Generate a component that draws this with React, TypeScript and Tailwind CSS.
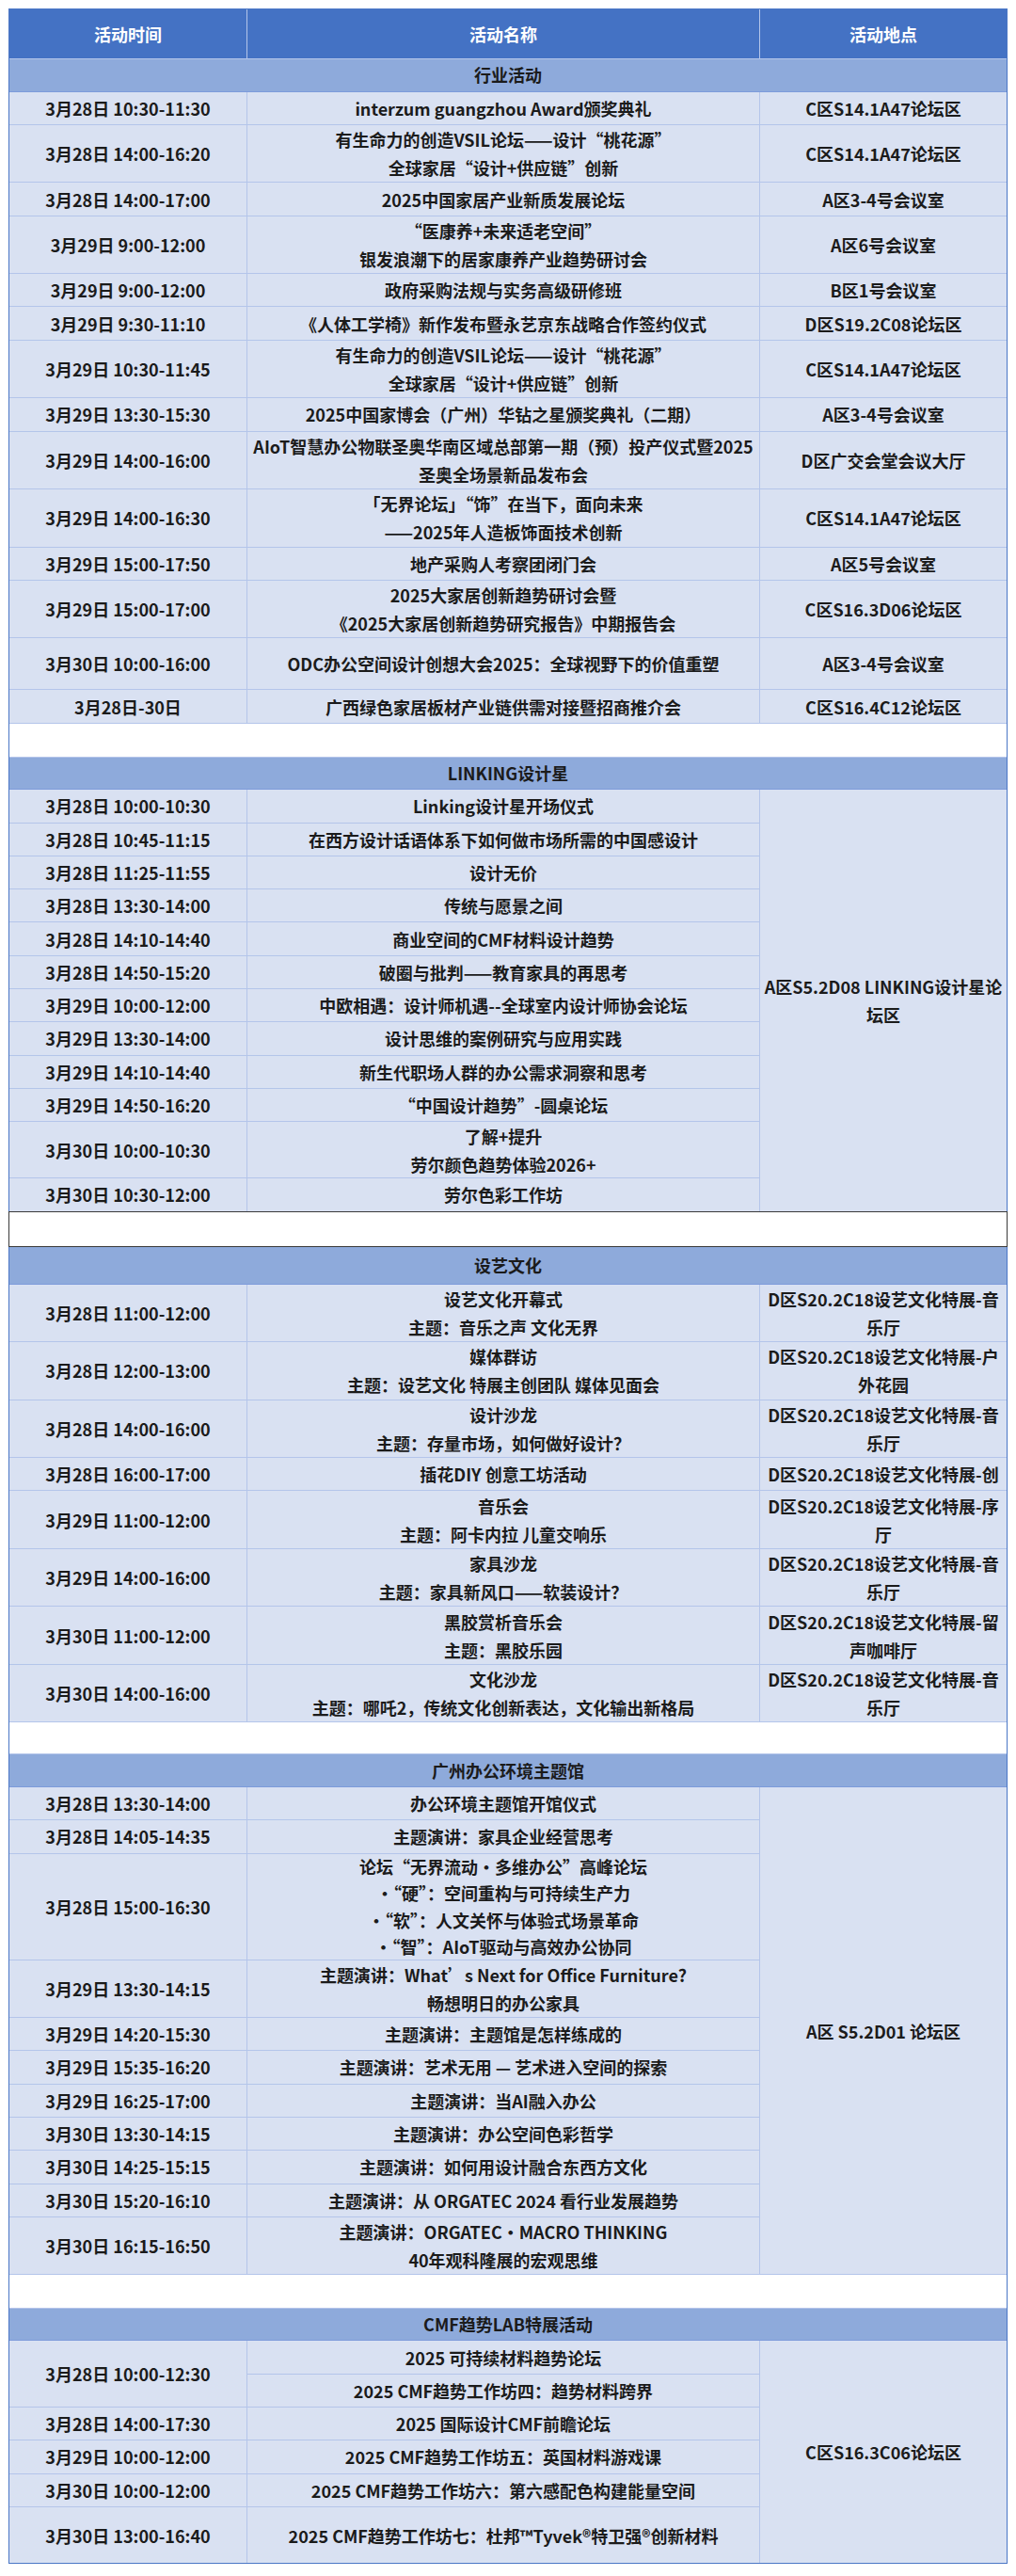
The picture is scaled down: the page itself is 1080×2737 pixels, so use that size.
import React from "react";

type Row = {
  t?: string;
  tSpan?: number;
  n: string[];
  l?: string[];
  lSpan?: number;
  h: string;
  lh?: string;
};

type Section = {
  title: string;
  titleH: string;
  blankH?: string;
  blankDark?: boolean;
  rows: Row[];
};

const S = "h-[34.3px]";
const D = "h-[60.5px]";

const sections: Section[] = [
  {
    title: "行业活动",
    titleH: "h-[33.6px]",
    rows: [
      { t: "3月28日 10:30-11:30", n: ["interzum guangzhou Award颁奖典礼"], l: ["C区S14.1A47论坛区"], h: S },
      { t: "3月28日 14:00-16:20", n: ["有生命力的创造VSIL论坛——设计“桃花源”", "全球家居“设计+供应链”创新"], l: ["C区S14.1A47论坛区"], h: D },
      { t: "3月28日 14:00-17:00", n: ["2025中国家居产业新质发展论坛"], l: ["A区3-4号会议室"], h: S },
      { t: "3月29日 9:00-12:00", n: ["“医康养+未来适老空间”", "银发浪潮下的居家康养产业趋势研讨会"], l: ["A区6号会议室"], h: D },
      { t: "3月29日 9:00-12:00", n: ["政府采购法规与实务高级研修班"], l: ["B区1号会议室"], h: S },
      { t: "3月29日 9:30-11:10", n: ["《人体工学椅》新作发布暨永艺京东战略合作签约仪式"], l: ["D区S19.2C08论坛区"], h: S },
      { t: "3月29日 10:30-11:45", n: ["有生命力的创造VSIL论坛——设计“桃花源”", "全球家居“设计+供应链”创新"], l: ["C区S14.1A47论坛区"], h: D },
      { t: "3月29日 13:30-15:30", n: ["2025中国家博会（广州）华钻之星颁奖典礼（二期）"], l: ["A区3-4号会议室"], h: S },
      { t: "3月29日 14:00-16:00", n: ["AIoT智慧办公物联圣奥华南区域总部第一期（预）投产仪式暨2025", "圣奥全场景新品发布会"], l: ["D区广交会堂会议大厅"], h: D },
      { t: "3月29日 14:00-16:30", n: ["「无界论坛」“饰”在当下，面向未来", "——2025年人造板饰面技术创新"], l: ["C区S14.1A47论坛区"], h: D },
      { t: "3月29日 15:00-17:50", n: ["地产采购人考察团闭门会"], l: ["A区5号会议室"], h: S },
      { t: "3月29日 15:00-17:00", n: ["2025大家居创新趋势研讨会暨", "《2025大家居创新趋势研究报告》中期报告会"], l: ["C区S16.3D06论坛区"], h: D },
      { t: "3月30日 10:00-16:00", n: ["ODC办公空间设计创想大会2025：全球视野下的价值重塑"], l: ["A区3-4号会议室"], h: "h-[54px]" },
      { t: "3月28日-30日", n: ["广西绿色家居板材产业链供需对接暨招商推介会"], l: ["C区S16.4C12论坛区"], h: S },
    ],
  },
  {
    title: "LINKING设计星",
    titleH: "h-[33.6px]",
    blankH: "h-[35px]",
    rows: [
      { t: "3月28日 10:00-10:30", n: ["Linking设计星开场仪式"], l: ["A区S5.2D08 LINKING设计星论", "坛区"], lSpan: 12, h: S },
      { t: "3月28日 10:45-11:15", n: ["在西方设计话语体系下如何做市场所需的中国感设计"], h: S },
      { t: "3月28日 11:25-11:55", n: ["设计无价"], h: S },
      { t: "3月28日 13:30-14:00", n: ["传统与愿景之间"], h: S },
      { t: "3月28日 14:10-14:40", n: ["商业空间的CMF材料设计趋势"], h: S },
      { t: "3月28日 14:50-15:20", n: ["破圈与批判——教育家具的再思考"], h: S },
      { t: "3月29日 10:00-12:00", n: ["中欧相遇：设计师机遇--全球室内设计师协会论坛"], h: S },
      { t: "3月29日 13:30-14:00", n: ["设计思维的案例研究与应用实践"], h: S },
      { t: "3月29日 14:10-14:40", n: ["新生代职场人群的办公需求洞察和思考"], h: S },
      { t: "3月29日 14:50-16:20", n: ["“中国设计趋势”-圆桌论坛"], h: S },
      { t: "3月30日 10:00-10:30", n: ["了解+提升", "劳尔颜色趋势体验2026+"], h: "h-[59px]" },
      { t: "3月30日 10:30-12:00", n: ["劳尔色彩工作坊"], h: S },
    ],
  },
  {
    title: "设艺文化",
    titleH: "h-[39px]",
    blankH: "h-[36px]",
    blankDark: true,
    rows: [
      { t: "3月28日 11:00-12:00", n: ["设艺文化开幕式", "主题：音乐之声 文化无界"], l: ["D区S20.2C18设艺文化特展-音", "乐厅"], h: D },
      { t: "3月28日 12:00-13:00", n: ["媒体群访", "主题：设艺文化 特展主创团队 媒体见面会"], l: ["D区S20.2C18设艺文化特展-户", "外花园"], h: D },
      { t: "3月28日 14:00-16:00", n: ["设计沙龙", "主题：存量市场，如何做好设计？"], l: ["D区S20.2C18设艺文化特展-音", "乐厅"], h: D },
      { t: "3月28日 16:00-17:00", n: ["插花DIY 创意工坊活动"], l: ["D区S20.2C18设艺文化特展-创"], h: S },
      { t: "3月29日 11:00-12:00", n: ["音乐会", "主题：阿卡内拉 儿童交响乐"], l: ["D区S20.2C18设艺文化特展-序", "厅"], h: D },
      { t: "3月29日 14:00-16:00", n: ["家具沙龙", "主题：家具新风口——软装设计？"], l: ["D区S20.2C18设艺文化特展-音", "乐厅"], h: D },
      { t: "3月30日 11:00-12:00", n: ["黑胶赏析音乐会", "主题：黑胶乐园"], l: ["D区S20.2C18设艺文化特展-留", "声咖啡厅"], h: D },
      { t: "3月30日 14:00-16:00", n: ["文化沙龙", "主题：哪吒2，传统文化创新表达，文化输出新格局"], l: ["D区S20.2C18设艺文化特展-音", "乐厅"], h: D },
    ],
  },
  {
    title: "广州办公环境主题馆",
    titleH: "h-[33.6px]",
    blankH: "h-[33px]",
    rows: [
      { t: "3月28日 13:30-14:00", n: ["办公环境主题馆开馆仪式"], l: ["A区 S5.2D01 论坛区"], lSpan: 11, h: S },
      { t: "3月28日 14:05-14:35", n: ["主题演讲：家具企业经营思考"], h: S },
      {
        t: "3月28日 15:00-16:30",
        n: [
          "论坛“无界流动·多维办公”高峰论坛",
          "·“硬”：空间重构与可持续生产力",
          "·“软”：人文关怀与体验式场景革命",
          "·“智”：AIoT驱动与高效办公协同",
        ],
        h: "h-[112px]",
        lh: "leading-[28.5px]",
      },
      { t: "3月29日 13:30-14:15", n: ["主题演讲：What’s Next for Office Furniture?", "畅想明日的办公家具"], h: D },
      { t: "3月29日 14:20-15:30", n: ["主题演讲：主题馆是怎样练成的"], h: S },
      { t: "3月29日 15:35-16:20", n: ["主题演讲：艺术无用 — 艺术进入空间的探索"], h: S },
      { t: "3月29日 16:25-17:00", n: ["主题演讲：当AI融入办公"], h: S },
      { t: "3月30日 13:30-14:15", n: ["主题演讲：办公空间色彩哲学"], h: S },
      { t: "3月30日 14:25-15:15", n: ["主题演讲：如何用设计融合东西方文化"], h: S },
      { t: "3月30日 15:20-16:10", n: ["主题演讲：从 ORGATEC 2024 看行业发展趋势"], h: S },
      { t: "3月30日 16:15-16:50", n: ["主题演讲：ORGATEC·MACRO THINKING", "40年观科隆展的宏观思维"], h: D },
    ],
  },
  {
    title: "CMF趋势LAB特展活动",
    titleH: "h-[33.6px]",
    blankH: "h-[34.5px]",
    rows: [
      { t: "3月28日 10:00-12:30", tSpan: 2, n: ["2025 可持续材料趋势论坛"], l: ["C区S16.3C06论坛区"], lSpan: 6, h: S },
      { n: ["2025 CMF趋势工作坊四：趋势材料跨界"], h: S },
      { t: "3月28日 14:00-17:30", n: ["2025 国际设计CMF前瞻论坛"], h: S },
      { t: "3月29日 10:00-12:00", n: ["2025 CMF趋势工作坊五：英国材料游戏课"], h: S },
      { t: "3月30日 10:00-12:00", n: ["2025 CMF趋势工作坊六：第六感配色构建能量空间"], h: S },
      { t: "3月30日 13:00-16:40", n: ["2025 CMF趋势工作坊七：杜邦™Tyvek®特卫强®创新材料"], h: "h-[59.6px]" },
    ],
  },
];

const cellBase =
  "flex flex-col items-center justify-center text-center bg-[#d9e1f2] overflow-hidden px-[6px] text-[18px] font-bold text-[#1b1b1b] whitespace-nowrap";

const spanClass: Record<number, string> = {
  2: "row-span-2",
  6: "row-span-6",
  11: "row-span-11",
  12: "row-span-12",
};

function Lines({ lines }: { lines: string[] }) {
  return (
    <>
      {lines.map((s, i) => (
        <div key={i}>{s}</div>
      ))}
    </>
  );
}

export default function App() {
  return (
    <div className="min-h-[2737px] bg-white pt-[9px] pl-[9px] font-['Noto_Sans_CJK_SC','Noto_Sans',sans-serif]">
      <div className="grid w-[1062px] grid-cols-[252px_544px_262px] gap-px border border-[#4a76c6] bg-[#b4c5ea]">
        {["活动时间", "活动名称", "活动地点"].map((h) => (
          <div
            key={h}
            className="flex h-[52px] items-center justify-center bg-[#4472c4] text-[18px] font-bold text-white"
          >
            {h}
          </div>
        ))}
        {sections.map((sec, si) => (
          <React.Fragment key={si}>
            {sec.blankH && (
              <div
                className={`col-span-3 bg-white ${sec.blankH} ${
                  sec.blankDark ? "relative z-10 shadow-[0_0_0_1px_#3a3a3a]" : ""
                }`}
              />
            )}
            <div
              className={`col-span-3 flex items-center justify-center bg-[#8eaadb] text-[18px] font-bold text-[#1b1b1b] shadow-[0_1px_0_#7d9bdb] ${sec.titleH}`}
            >
              {sec.title}
            </div>
            {sec.rows.map((r, ri) => (
              <React.Fragment key={ri}>
                {r.t && (
                  <div
                    className={`${cellBase} leading-[30px] ${
                      r.tSpan ? spanClass[r.tSpan] : r.h
                    }`}
                  >
                    {r.t}
                  </div>
                )}
                <div className={`${cellBase} ${r.lh ?? "leading-[30px]"} ${r.h}`}>
                  <Lines lines={r.n} />
                </div>
                {r.l && (
                  <div
                    className={`${cellBase} leading-[30px] ${
                      r.lSpan ? spanClass[r.lSpan] : r.h
                    }`}
                  >
                    <Lines lines={r.l} />
                  </div>
                )}
              </React.Fragment>
            ))}
          </React.Fragment>
        ))}
      </div>
    </div>
  );
}
